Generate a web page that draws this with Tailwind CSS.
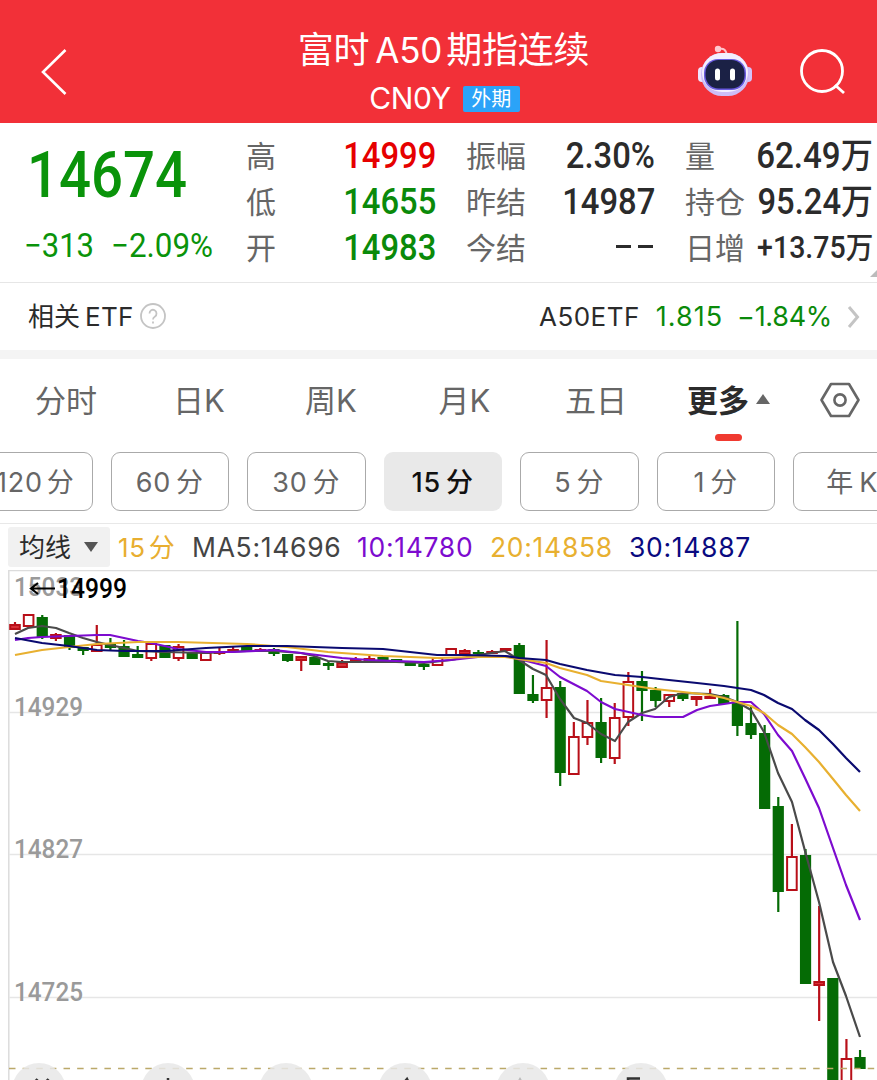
<!DOCTYPE html>
<html lang="zh-CN">
<head>
    <meta charset="UTF-8">
    <meta name="viewport" content="width=device-width, initial-scale=1.0">
    <title>富时A50期指连续</title>
    <script src="https://cdn.jsdelivr.net/npm/@tailwindcss/browser@4"></script>
</head>
<body class="w-[877px] h-[1080px] overflow-hidden bg-white text-[#2b2b2b] font-['Inter','Noto_Sans_CJK_SC',sans-serif] whitespace-nowrap">
    <div class="w-[877px] h-[1080px] flex flex-col overflow-hidden">

        <!-- Header -->
        <header class="h-[123px] shrink-0 bg-[#f23038] text-white flex">
            <div class="w-[200px] pl-10 pt-[48px]">
                <svg class="w-7 h-12" viewBox="0 0 28 48" fill="none" stroke="#fff" stroke-width="2.6"><path d="M25.5 2 L3 24 L25.5 46"/></svg>
            </div>
            <div class="w-[487px] flex flex-col items-center pt-[26px]">
                <div class="h-[47px] flex items-center text-[36px] leading-[48px] tracking-[-0.2px]"><span>富时</span><span class="ml-1.5 mr-1 text-[35px]">A50</span><span>期指连续</span></div>
                <div class="h-[50px] flex items-center text-[30px] pl-0.5 pt-px">
                    <span class="tracking-[-0.3px]">CN0Y</span>
                    <span class="ml-3 mt-px w-[57px] h-[26px] rounded-[2px] bg-[#2ba3f8] text-[20px] leading-[26px] text-center">外期</span>
                </div>
            </div>
            <div class="flex pt-[44px] pl-[9px]">
                <svg class="w-[58px] h-[54px]" viewBox="0 0 58 54">
                    <path d="M23 5 Q30 3 31 12" fill="none" stroke="#ffc4cc" stroke-width="2"/>
                    <circle cx="22" cy="5" r="3.2" fill="#ffc9d0"/>
                    <rect x="2" y="23" width="8" height="15" rx="4" fill="#f0e4ff"/>
                    <rect x="48" y="23" width="8" height="15" rx="4" fill="#d3c3fa"/>
                    <rect x="5" y="9" width="48" height="43" rx="21" fill="#cdbdf7"/>
                    <rect x="6" y="9" width="46" height="39" rx="20" fill="#f3eefe"/>
                    <rect x="8" y="15" width="42" height="31" rx="14" fill="#6a5be0"/>
                    <rect x="9.500" y="16" width="39" height="28.500" rx="13" fill="#1b2145"/>
                    <rect x="19" y="24.500" width="5" height="12" rx="2.500" fill="#fff"/>
                    <rect x="34" y="24.500" width="5" height="12" rx="2.500" fill="#fff"/>
                </svg>
                <svg class="ml-[44px] mt-1 w-[50px] h-[50px]" viewBox="0 0 50 50" fill="none" stroke="#fff" stroke-width="2.800"><circle cx="24" cy="23" r="20.500"/><path d="M37 37 L46 45"/></svg>
            </div>
        </header>

        <!-- Quote -->
        <section class="relative h-[160px] shrink-0 border-b border-[#e6e6e6] flex font-['Roboto','Noto_Sans_CJK_SC',sans-serif]">
            <div class="w-[246px] text-[#0a930a]">
                <div class="pl-[27px] pt-[15px] h-[98px] text-[64px] leading-[76px] font-medium"><span class="inline-block origin-left scale-x-[0.88]">14674</span></div>
                <div class="pl-[24px] pt-px flex text-[33px] leading-[48px]"><span class="w-[87px]"><span class="inline-block origin-left scale-x-[0.94]">−313</span></span><span class="inline-block origin-left scale-x-[0.95]">−2.09%</span></div>
            </div>
            <div class="w-[190px] pt-[10px] text-[36px] leading-[46px] font-medium">
                <div class="h-[46px] flex justify-between"><span class="pt-px text-[30px] font-normal text-[#666]">高</span><span class="inline-block origin-right scale-x-[0.91] text-[#e60000]">14999</span></div>
                <div class="h-[46px] flex justify-between"><span class="pt-px text-[30px] font-normal text-[#666]">低</span><span class="inline-block origin-right scale-x-[0.91] text-[#0a8a0a]">14655</span></div>
                <div class="h-[46px] flex justify-between"><span class="pt-px text-[30px] font-normal text-[#666]">开</span><span class="inline-block origin-right scale-x-[0.91] text-[#0a8a0a]">14983</span></div>
            </div>
            <div class="ml-[30px] w-[189px] pt-[10px] text-[36px] leading-[46px] font-medium">
                <div class="h-[46px] flex justify-between"><span class="pt-px text-[30px] font-normal text-[#666]">振幅</span><span class="inline-block origin-right scale-x-[0.91]">2.30%</span></div>
                <div class="h-[46px] flex justify-between"><span class="pt-px text-[30px] font-normal text-[#666]">昨结</span><span class="inline-block origin-right scale-x-[0.91]">14987</span></div>
                <div class="h-[46px] flex justify-between"><span class="pt-px text-[30px] font-normal text-[#666]">今结</span><span class="flex items-center gap-[7px] pr-0.5 pb-1"><i class="w-[15px] h-[3px] bg-[#2b2b2b]"></i><i class="w-[15px] h-[3px] bg-[#2b2b2b]"></i></span></div>
            </div>
            <div class="ml-[30px] w-[188px] pt-[10px] text-[36px] leading-[46px] font-medium">
                <div class="h-[46px] flex justify-between"><span class="pt-px text-[30px] font-normal text-[#666]">量</span><span class="inline-block origin-right scale-x-[0.92]">62.49<span class="text-[35px]">万</span></span></div>
                <div class="h-[46px] flex justify-between"><span class="pt-px text-[30px] font-normal text-[#666]">持仓</span><span class="-ml-4 inline-block origin-right scale-x-[0.91]">95.24<span class="text-[35px]">万</span></span></div>
                <div class="h-[46px] flex justify-between"><span class="pt-px text-[30px] font-normal text-[#666]">日增</span><span class="-ml-4 inline-block origin-right scale-x-[0.92] text-[31px]">+13.75<span class="text-[30px]">万</span></span></div>
            </div>
            <svg class="absolute right-0 bottom-[5px] w-[7px] h-[7px]" viewBox="0 0 7 7"><path d="M0 7 L7 0 V7 Z" fill="#bbb"/></svg>
        </section>

        <!-- Related ETF -->
        <section class="h-[67px] shrink-0 flex items-center pl-7 pr-[17px] text-[26px]">
            <span>相关</span><span class="ml-[5px] tracking-[0.3px]">ETF</span>
            <svg class="ml-[6px] -mt-px w-[26px] h-[26px]" viewBox="0 0 26 26" fill="none" stroke="#c4c4c4" stroke-width="1.800"><circle cx="13" cy="13" r="12"/><path d="M9.500 10.500 a3.500 3.700 0 1 1 5.500 3 q-2 1.200 -2 3"/><path d="M13 18.500 v2"/></svg>
            <span class="ml-auto tracking-[0.5px]">A50ETF</span>
            <span class="ml-4 mt-px text-[27px] tracking-[1px] text-[#0a8a0a]">1.815</span>
            <span class="ml-[14px] mt-px text-[27px] tracking-[-0.3px] text-[#0a8a0a]">−1.84%</span>
            <svg class="ml-[15px] w-[13px] h-[24px]" viewBox="0 0 13 24" fill="none" stroke="#c4c4c4" stroke-width="3"><path d="M2 2 L10.500 12 L2 22"/></svg>
        </section>
        <div class="h-[9px] shrink-0 bg-[#f4f4f4]"></div>

        <!-- Period tabs -->
        <nav class="h-[93px] shrink-0 flex text-[31px] leading-[84px] text-[#666]">
            <span class="w-[132px] text-center">分时</span>
            <span class="w-[134px] text-center">日K</span>
            <span class="w-[130px] text-center">周K</span>
            <span class="w-[137px] text-center">月K</span>
            <span class="w-[126px] text-center">五日</span>
            <div class="relative w-[138px] pl-[28px] flex items-center h-[84px] font-bold text-[#2b2b2b]">
                <span>更多</span>
                <svg class="ml-[7px] -mt-1 w-[14px] h-[10px]" viewBox="0 0 14 10"><path d="M0 10 L7 0 L14 10 Z" fill="#666"/></svg>
                <i class="absolute left-[56px] top-[75px] w-[27px] h-[7px] rounded-full bg-[#f03a30]"></i>
            </div>
            <svg class="ml-[23px] mt-[23px] w-[40px] h-[36px]" viewBox="0 0 40 36" fill="none" stroke="#666" stroke-width="2.600"><path d="M11 2 H29 L38.500 18 L29 34 H11 L1.500 18 Z" stroke-linejoin="round"/><circle cx="20" cy="18" r="5.600"/></svg>
        </nav>

        <!-- Minute periods -->
        <div class="h-[71px] shrink-0 flex gap-[18px] -ml-[26px] text-[27px] leading-[60px] tracking-[0.8px] text-[#666]">
            <div class="w-[118.500px] h-[59px] shrink-0 rounded-[9px] border border-[#aaa] pl-1 text-center">120<span class="ml-1">分</span></div>
            <div class="w-[118.500px] h-[59px] shrink-0 rounded-[9px] border border-[#aaa] text-center">60<span class="ml-[5px]">分</span></div>
            <div class="w-[118.500px] h-[59px] shrink-0 rounded-[9px] border border-[#aaa] text-center">30<span class="ml-[5px]">分</span></div>
            <div class="w-[118.500px] h-[59px] shrink-0 rounded-[9px] bg-[#e9e9e9] text-[#111] font-medium pt-px text-center">15<span class="ml-[5px]">分</span></div>
            <div class="w-[118.500px] h-[59px] shrink-0 rounded-[9px] border border-[#aaa] text-center">5<span class="ml-[5px]">分</span></div>
            <div class="w-[118.500px] h-[59px] shrink-0 rounded-[9px] border border-[#aaa] text-center">1<span class="ml-[5px]">分</span></div>
            <div class="w-[118.500px] h-[59px] shrink-0 rounded-[9px] border border-[#aaa] text-center">年<span class="ml-[5px]">K</span></div>
        </div>

        <!-- Moving average legend -->
        <div class="h-[47px] shrink-0 border-t border-[#e8e8e8] flex items-center pl-2 text-[26.500px] tracking-[0.7px]">
            <div class="w-[102px] h-[40px] rounded-[3px] bg-[#f1f1f1] flex items-center pl-[11px] text-[26px] tracking-normal">
                <span>均线</span>
                <svg class="ml-[13px] w-[14px] h-[10px]" viewBox="0 0 14 10"><path d="M0 0 H14 L7 10 Z" fill="#555"/></svg>
            </div>
            <span class="ml-2 mt-px w-[74px] text-[26px] text-[#e8ae30]">15<span class="ml-[3px]">分</span></span>
            <span class="mt-px w-[165px] text-[#444]">MA5:14696</span>
            <span class="mt-px w-[133px] text-[#7d0bcf]">10:14780</span>
            <span class="mt-px w-[139px] text-[#e8b030]">20:14858</span>
            <span class="mt-px text-[#0a0a80]">30:14887</span>
        </div>

        <!-- Chart: viewBox uses the same units as the page, starting at y=570 -->
        <svg id="chart" class="w-[877px] h-[510px] shrink-0 font-['Roboto',sans-serif]" viewBox="0 570 877 510"></svg>
    </div>

    <script>
        // colour, body top, body bottom, wick top, wick bottom
        const candles = [
            ['r',624,629,622,630],['r',614,626,614,627],['g',617,637,615,639],['r',634,638,633,641],['g',635,648,635,650],
            ['g',647,651,647,655],['r',644,651,625,651],['g',644,648,638,650],['g',646,657,640,657],['g',654,658,646,658],
            ['r',643,658,643,661],['g',645,658,645,658],['r',646,658,644,661],['g',652,659,652,659],['r',652,660,652,660],
            ['r',651,653,648,655],['r',649,651,647,651],['g',647,652,647,652],['r',649,651,648,652],['g',649,654,648,656],
            ['g',654,661,654,662],['r',656,660,656,671],['g',657,665,657,665],['g',663,666,661,670],['r',662,667,660,667],
            ['r',659,662,657,663],['r',658,661,656,662],['g',657,662,657,662],['g',659,663,659,663],['g',663,666,663,666],
            ['g',664,667,663,670],['r',657,665,657,665],['r',648,655,648,655],['r',650,654,649,655],['g',652,654,650,655],
            ['r',651,653,650,654],['r',648,650,648,650],['g',645,694,643,694],['g',694,701,675,703],['r',687,700,640,718],
            ['g',687,773,681,786],['r',736,774,722,774],['r',722,737,700,745],['g',722,758,698,763],['r',717,758,703,764],
            ['r',681,717,672,726],['g',681,691,671,721],['g',690,701,687,707],['r',694,701,694,707],['g',693,699,693,701],
            ['r',696,699,696,706],['r',696,698,689,699],['g',695,704,694,704],['g',703,726,621,736],['g',723,735,705,739],
            ['g',733,809,725,809],['g',806,892,797,912],['r',856,890,824,890],['g',855,984,849,984],['r',981,985,906,1021],
            ['g',978,1090,978,1090],['r',1058,1090,1039,1090],['g',1057,1069,1050,1069]
        ];

        const averages = [
            { color: '#4a4a4a', points: '15,634 28,628 42,626 56,628 69,633 83,638 97,642 110,645 124,648 138,651 165,652 206,653 247,651 274,651 301,653 314,656 328,661 342,662 369,662 396,662 424,663 451,660 478,655 505,651 519,660 533,669 546,675 560,699 574,718 587,723 601,734 615,741 628,722 642,713 655,709 669,697 683,693 710,694 724,697 737,702 751,710 764,732 778,773 792,802 805,851 819,902 833,962 846,996 860,1037' },
            { color: '#7d0bcf', points: '15,640 28,638 42,637 69,636 97,635 110,635 124,638 138,641 151,643 178,649 206,652 233,652 274,650 301,653 342,658 369,660 396,661 424,662 451,660 478,657 505,656 519,659 546,666 560,677 587,691 601,702 615,709 642,715 655,717 683,717 697,710 710,706 724,704 737,702 751,702 764,714 778,735 792,751 805,778 819,808 833,848 846,885 860,920' },
            { color: '#e8b030', points: '15,655 42,650 69,647 97,644 138,642 178,642 247,644 287,647 328,652 383,656 437,658 478,657 505,657 546,663 560,668 587,675 601,681 628,685 655,689 683,692 710,695 724,698 737,702 751,706 764,713 778,725 792,734 805,747 819,762 833,779 846,795 860,811' },
            { color: '#0a0a70', points: '15,638 42,643 69,646 97,650 124,651 165,651 206,648 247,646 287,646 342,648 383,649 410,652 437,655 465,655 505,656 519,658 546,660 560,664 587,670 615,675 642,677 669,680 697,683 724,686 751,690 764,695 778,703 792,709 805,720 819,730 833,744 846,758 860,772' }
        ];

        const step = 13.63;
        let svg = '<path d="M8.800 1080 V570.500 H877" fill="none" stroke="#dcdcdc" stroke-width="1.500"/>';
        svg += '<path d="M9 712.500 H877 M9 854.500 H877 M9 997.500 H877" stroke="#e6e6e6" stroke-width="1.300"/>';

        // axis labels
        [['15033', 596], ['14929', 716], ['14827', 858], ['14725', 1001]].forEach(([label, y]) => {
            svg += `<text x="14" y="${y}" font-size="26" font-weight="500" fill="#9a9a9a" textLength="69" lengthAdjust="spacingAndGlyphs">${label}</text>`;
        });

        candles.forEach(([kind, top, bottom, high, low], i) => {
            const x = 15 + i * step;
            const color = kind === 'r' ? '#b80f18' : '#056b05';
            svg += `<path d="M${x} ${high} V${low}" stroke="${color}" stroke-width="2.200"/>`;
            svg += kind === 'r'
                ? `<rect x="${x - 4.8}" y="${top + 1}" width="9.600" height="${Math.max(bottom - top - 1, 1)}" fill="${bottom - top < 6 ? '#d83038' : '#fff'}" stroke="${color}" stroke-width="2"/>`
                : `<rect x="${x - 5.6}" y="${top}" width="11.200" height="${bottom - top}" fill="${color}"/>`;
        });

        averages.forEach(line => {
            svg += `<polyline points="${line.points}" fill="none" stroke="${line.color}" stroke-width="2.200" stroke-linejoin="round"/>`;
        });

        // session high marker
        svg += '<path d="M55 588.500 H31 M38 583 L31 588.500 L38 594" fill="none" stroke="#000" stroke-width="2.200"/>';
        svg += '<text x="57" y="598" font-size="27" font-weight="500" fill="#000" textLength="70" lengthAdjust="spacingAndGlyphs">14999</text>';

        // last price line
        svg += '<path d="M9 1068.500 H877" stroke="#bba96a" stroke-width="1.300" stroke-dasharray="6.500 7.130"/>';

        // toolbar buttons cut off by the bottom edge
        [39, 168, 286, 405, 523, 641].forEach(x => {
            svg += `<circle cx="${x}" cy="1090" r="27" fill="#e8e8e8" fill-opacity="0.850"/>`;
        });
        svg += '<g fill="none" stroke="#333" stroke-width="2.500"><path d="M30 1087 L37.500 1079 M41 1087 L48.500 1079"/><path d="M168 1078 V1088"/><path d="M402 1085 L407 1079 L410 1085"/><path d="M628 1090 V1078.500 H640"/></g>';
        svg += '<path d="M516 1086 L520 1079 L524 1086" fill="none" stroke="#bbb" stroke-width="2"/>';
        document.getElementById('chart').innerHTML = svg;
    </script>
</body>
</html>
